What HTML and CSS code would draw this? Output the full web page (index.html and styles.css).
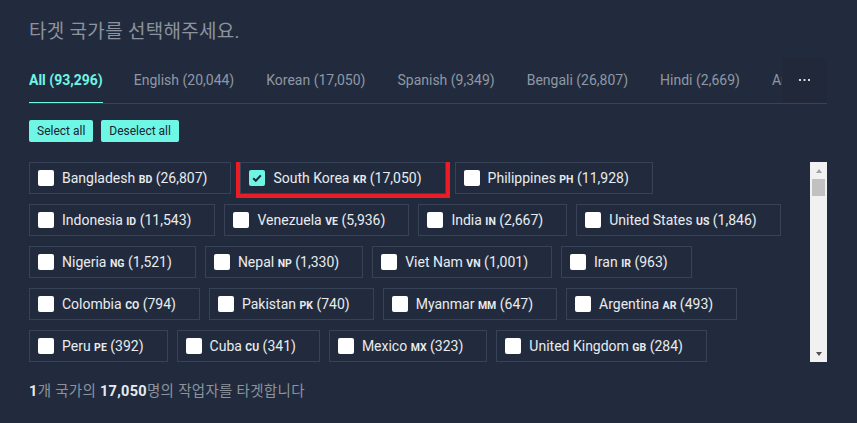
FILE: index.html
```html
<!DOCTYPE html>
<html lang="ko">
<head>
    <meta charset="UTF-8">
    <meta name="viewport" content="width=device-width, initial-scale=1.0">
    <title>타겟 국가 선택</title>
    <link rel="stylesheet" href="styles.css">
</head>
<body>
    <div class="panel">
        <h2 class="title">타겟 국가를 선택해주세요.</h2>

        <div class="tabs">
            <div class="tab-list">
                <span class="tab active">All (93,296)</span>
                <span class="tab">English (20,044)</span>
                <span class="tab">Korean (17,050)</span>
                <span class="tab">Spanish (9,349)</span>
                <span class="tab">Bengali (26,807)</span>
                <span class="tab">Hindi (2,669)</span>
                <span class="tab">Arabic (1,204)</span>
                <span class="tab">Indonesian (11,543)</span>
            </div>
            <button class="more" type="button">
                <svg width="11" height="3" viewBox="0 0 11 3"><rect x="0" y="0" width="2" height="2" fill="#d5dae1"/><rect x="4.5" y="0" width="2" height="2" fill="#d5dae1"/><rect x="9" y="0" width="2" height="2" fill="#d5dae1"/></svg>
            </button>
        </div>

        <div class="actions">
            <button class="btn" type="button">Select all</button>
            <button class="btn" type="button">Deselect all</button>
        </div>

        <div class="country-box">
            <div class="country-list">
                <label class="country"><span class="check"></span><span class="name">Bangladesh <span class="code">bd</span> (26,807)</span></label>
                <label class="country checked highlight"><span class="check"><svg width="16" height="16" viewBox="0 0 16 16"><path d="M4.2 8.3 L6.8 10.8 L11.8 5.4" fill="none" stroke="#1e2838" stroke-width="2"/></svg></span><span class="name">South Korea <span class="code">kr</span> (17,050)</span></label>
                <label class="country"><span class="check"></span><span class="name">Philippines <span class="code">ph</span> (11,928)</span></label>
                <label class="country"><span class="check"></span><span class="name">Indonesia <span class="code">id</span> (11,543)</span></label>
                <label class="country"><span class="check"></span><span class="name">Venezuela <span class="code">ve</span> (5,936)</span></label>
                <label class="country"><span class="check"></span><span class="name">India <span class="code">in</span> (2,667)</span></label>
                <label class="country"><span class="check"></span><span class="name">United States <span class="code">us</span> (1,846)</span></label>
                <label class="country"><span class="check"></span><span class="name">Nigeria <span class="code">ng</span> (1,521)</span></label>
                <label class="country"><span class="check"></span><span class="name">Nepal <span class="code">np</span> (1,330)</span></label>
                <label class="country"><span class="check"></span><span class="name">Viet Nam <span class="code">vn</span> (1,001)</span></label>
                <label class="country"><span class="check"></span><span class="name">Iran <span class="code">ir</span> (963)</span></label>
                <label class="country"><span class="check"></span><span class="name">Colombia <span class="code">co</span> (794)</span></label>
                <label class="country"><span class="check"></span><span class="name">Pakistan <span class="code">pk</span> (740)</span></label>
                <label class="country"><span class="check"></span><span class="name">Myanmar <span class="code">mm</span> (647)</span></label>
                <label class="country"><span class="check"></span><span class="name">Argentina <span class="code">ar</span> (493)</span></label>
                <label class="country"><span class="check"></span><span class="name">Peru <span class="code">pe</span> (392)</span></label>
                <label class="country"><span class="check"></span><span class="name">Cuba <span class="code">cu</span> (341)</span></label>
                <label class="country"><span class="check"></span><span class="name">Mexico <span class="code">mx</span> (323)</span></label>
                <label class="country"><span class="check"></span><span class="name">United Kingdom <span class="code">gb</span> (284)</span></label>
                <label class="country"><span class="check"></span><span class="name">Brazil <span class="code">br</span> (271)</span></label>
                <label class="country"><span class="check"></span><span class="name">Egypt <span class="code">eg</span> (265)</span></label>
                <label class="country"><span class="check"></span><span class="name">Kenya <span class="code">ke</span> (248)</span></label>
                <label class="country"><span class="check"></span><span class="name">Chile <span class="code">cl</span> (231)</span></label>
            </div>
            <div class="scrollbar">
                <div class="scroll-btn"><span class="arrow-up"></span></div>
                <div class="scroll-track"><div class="scroll-thumb"></div></div>
                <div class="scroll-btn"><span class="arrow-down"></span></div>
            </div>
        </div>

        <p class="summary"><b>1</b>개 국가의 <b>17,050</b>명의 작업자를 타겟합니다</p>
    </div>
</body>
</html>
```

FILE: styles.css
```css
body {
    font-family: Roboto, "Noto Sans CJK KR", sans-serif;
    background-color: #222b3d;
    margin: 0;
}
.panel {
    padding: 19px 30px 0 29px;
}
.title {
    margin: 0;
    font-size: 19px;
    font-weight: normal;
    letter-spacing: 0.3px;
    line-height: 26px;
    color: #8b939e;
}
.tabs {
    display: flex;
    margin-top: 13px;
    height: 45px;
    border-bottom: 1px solid #3a4356;
}
.tab-list {
    display: flex;
    flex: 1;
    overflow: hidden;
    white-space: nowrap;
}
.tab {
    position: relative;
    margin-right: 32px;
    font-size: 14px;
    line-height: 45px;
    color: #8e98a5;
}
.tab.active {
    margin-right: 31px;
    color: #6ff5e4;
    font-weight: bold;
}
.tab.active::after {
    content: "";
    position: absolute;
    left: 0;
    right: 0;
    bottom: -1px;
    height: 2px;
    background-color: #6ff5e4;
}
.more {
    width: 45px;
    height: 45px;
    border: none;
    padding: 0;
    background-color: #202839;
    display: flex;
    align-items: center;
    justify-content: center;
}
.actions {
    display: flex;
    gap: 8px;
    margin-top: 16px;
}
.btn {
    height: 22px;
    padding: 0 8px;
    border: none;
    border-radius: 2px;
    background-color: #6ff7e5;
    color: #1b2230;
    font-family: Roboto, sans-serif;
    font-size: 12px;
}
.country-box {
    display: flex;
    height: 200px;
    margin-top: 20px;
}
.country-list {
    flex: 1;
    display: flex;
    flex-wrap: wrap;
    align-content: flex-start;
    gap: 10px 9px;
    overflow: hidden;
}
.country {
    display: flex;
    align-items: center;
    box-sizing: border-box;
    height: 32px;
    padding: 0 23px 0 8px;
    border: 1px solid #384256;
    color: #e8ebef;
    font-size: 14px;
    white-space: nowrap;
}
.country.highlight {
    outline: 4px solid #ec1c24;
}
.check {
    width: 16px;
    height: 16px;
    border-radius: 2px;
    background-color: #ffffff;
    margin-right: 8px;
}
.check svg {
    display: block;
}
.country.checked .check {
    background-color: #6ff5e4;
}
.code {
    font-size: 10.5px;
    font-weight: bold;
    text-transform: uppercase;
}
.scrollbar {
    width: 17px;
    display: flex;
    flex-direction: column;
    background-color: #f1f1f1;
}
.scroll-btn {
    height: 17px;
    display: flex;
    align-items: center;
    justify-content: center;
}
.arrow-up {
    border-left: 3.5px solid transparent;
    border-right: 3.5px solid transparent;
    border-bottom: 4px solid #a3a3a3;
}
.arrow-down {
    border-left: 3.5px solid transparent;
    border-right: 3.5px solid transparent;
    border-top: 4px solid #505050;
}
.scroll-track {
    flex: 1;
    padding: 0 2px;
}
.scroll-thumb {
    height: 17px;
    background-color: #c1c1c1;
}
.summary {
    margin: 20px 0 0;
    font-size: 14.5px;
    letter-spacing: 0.3px;
    line-height: 20px;
    color: #8b939e;
}
.summary b {
    color: #e8ebef;
}
```
